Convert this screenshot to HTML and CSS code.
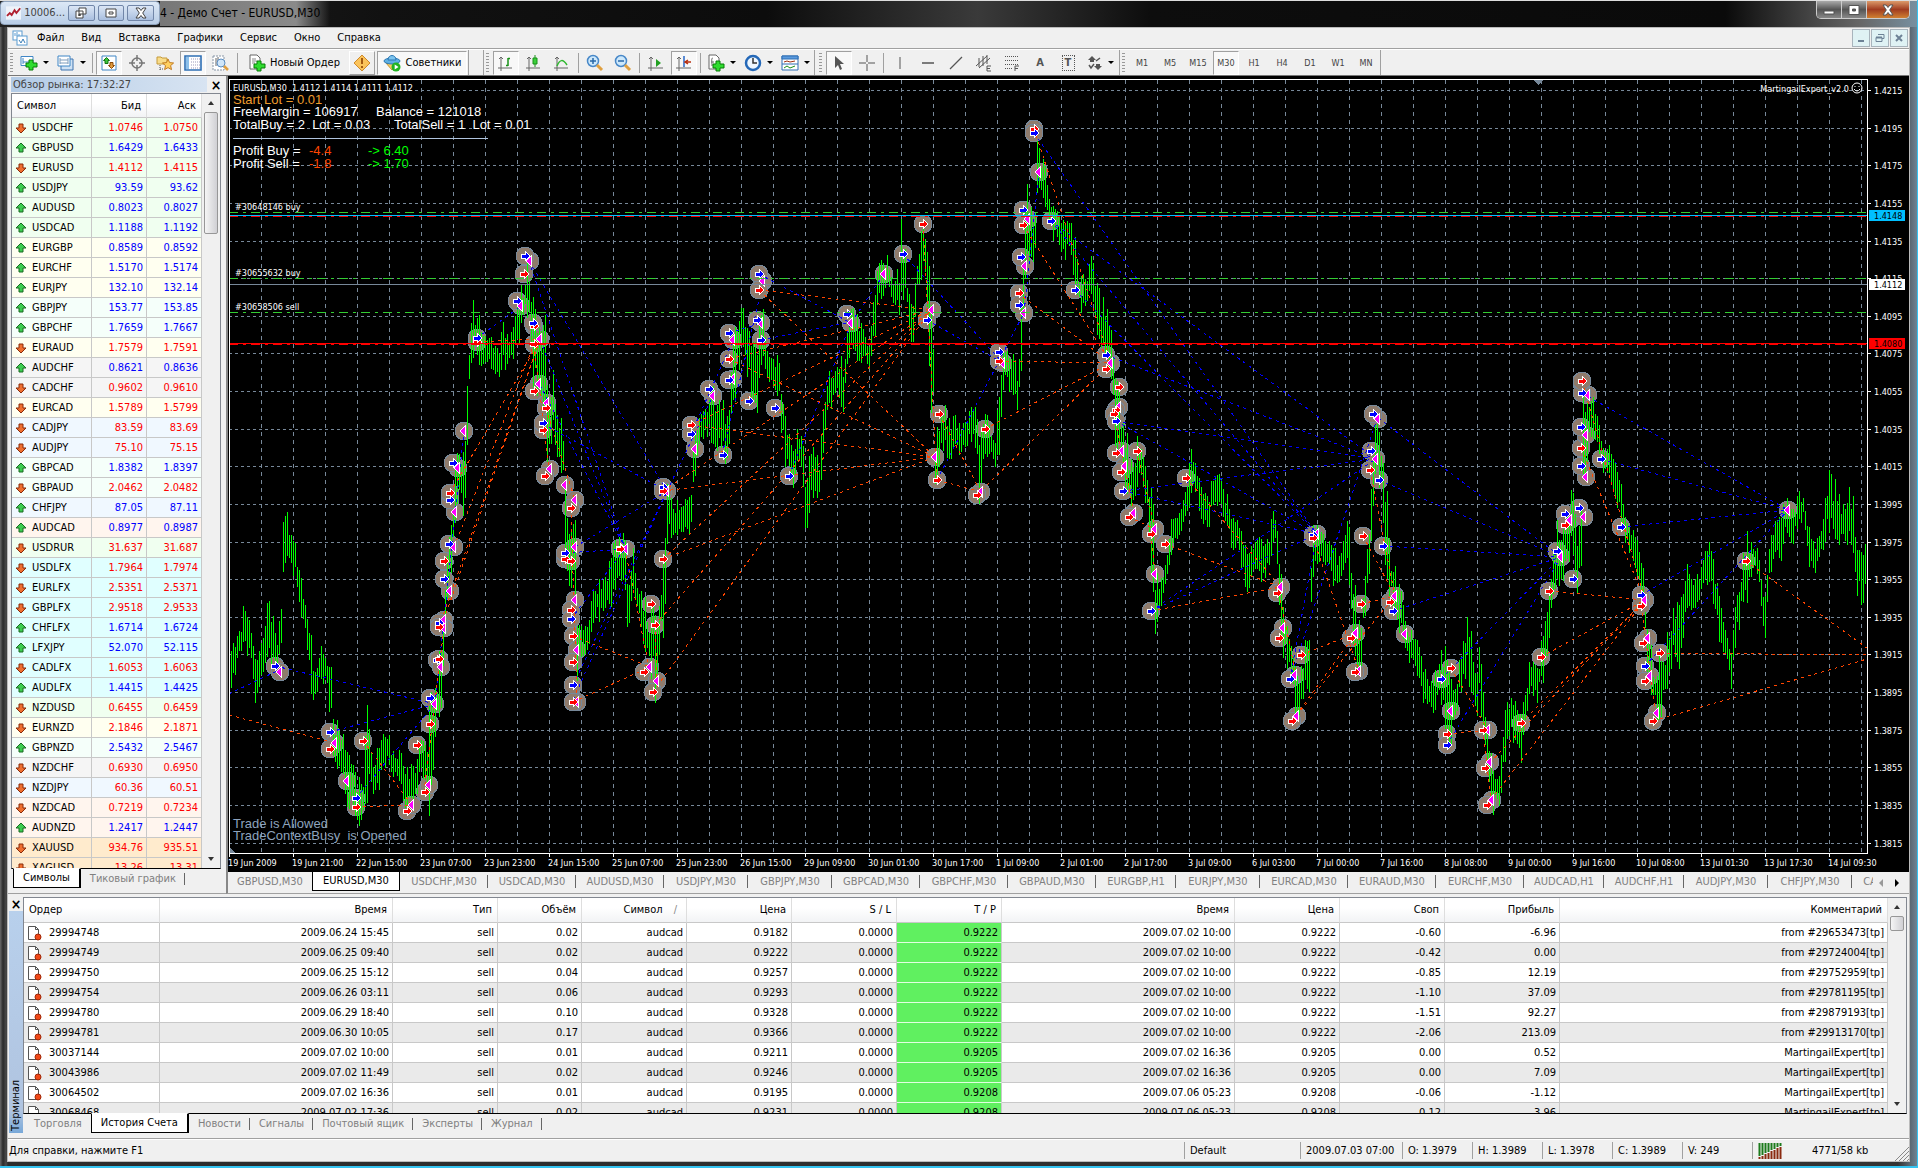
FILE: index.html
```html
<!DOCTYPE html>
<html lang="ru">
<head>
  <meta charset="UTF-8" />
  <title>Демо Счет - EURUSD,M30</title>
  <link rel="stylesheet" href="styles.css">
</head>
<body>
  <div class="window">
    <header class="titlebar">
      <div class="mini">
        <svg width="16" height="14" viewBox="0 0 16 14"><rect width="16" height="14" fill="#eef3fa"/><path d="M1 10l3-3 2 2 3-5 2 3 4-5" fill="none" stroke="#b02030" stroke-width="2"/></svg>
        <span>10006...</span>
        <button aria-label="Восстановить"><svg width="14" height="12" viewBox="0 0 14 12"><path d="M5 1h7v6h-7zM2 4h7v7h-7z" fill="#fff" stroke="#444"/><path d="M4.500 7.500h2v1h-2z" stroke="#444" fill="none"/></svg></button>
        <button aria-label="Развернуть"><svg width="14" height="12" viewBox="0 0 14 12"><path d="M2 2h10v8H2z" fill="#fff" stroke="#444"/><path d="M5 5h4v2H5z" fill="none" stroke="#444"/></svg></button>
        <button aria-label="Закрыть"><svg width="14" height="12" viewBox="0 0 14 12"><path d="M2 1h3l2 2.500L9 1h3L8.700 6l3.300 5H9L7 8.500 5 11H2l3.300-5z" fill="#fff" stroke="#444"/></svg></button>
      </div>
      <span class="title">4 - Демо Счет - EURUSD,M30</span>
      <div class="caption">
        <button aria-label="Свернуть"><svg width="14" height="12" viewBox="0 0 14 12"><path d="M2 7h10v3H2z" fill="#fff" stroke="#555"/></svg></button>
        <button aria-label="Окно"><svg width="14" height="12" viewBox="0 0 14 12"><path d="M2 1.500h10v9H2z M5.500 5h3v2h-3z" fill="#fff" fill-rule="evenodd" stroke="#555"/></svg></button>
        <button class="caption-close" aria-label="Выход"><svg width="14" height="12" viewBox="0 0 14 12"><path d="M2 1h3l2 2.500L9 1h3L8.700 6l3.300 5H9L7 8.500 5 11H2l3.300-5z" fill="#fff" stroke="#555"/></svg></button>
      </div>
    </header>

    <div class="client">
      <nav class="menu">
        <svg width="16" height="16" viewBox="0 0 16 16"><rect x="1" y="1" width="9" height="9" fill="#fff" stroke="#5b9bd0"/><path d="M3 3v3M5 2v4M7 4v3" stroke="#5b9bd0"/><rect x="5" y="6" width="10" height="9" fill="#fff" stroke="#5b9bd0"/><path d="M7 10l2 3 2-4 2 4" fill="none" stroke="#3c7fb8"/></svg>
        <a href="#">Файл</a>
        <a href="#">Вид</a>
        <a href="#">Вставка</a>
        <a href="#">Графики</a>
        <a href="#">Сервис</a>
        <a href="#">Окно</a>
        <a href="#">Справка</a>
        <div class="mdi">
          <button aria-label="Свернуть график"><svg width="10" height="10" viewBox="0 0 10 10"><path d="M2 8h6" stroke="#6d8296" stroke-width="2"/></svg></button>
          <button aria-label="Восстановить график"><svg width="10" height="10" viewBox="0 0 10 10"><path d="M3 1.500h6v4H7M1 4.500h6v4H1z" fill="none" stroke="#6d8296"/><path d="M1 4.500h6" stroke="#6d8296" stroke-width="2"/></svg></button>
          <button aria-label="Закрыть график"><svg width="10" height="10" viewBox="0 0 10 10"><path d="M2 2l6 6M8 2l-6 6" stroke="#6d8296" stroke-width="2"/></svg></button>
        </div>
      </nav>

      <div class="toolbar">
        <div class="band">
          <i class="grip"></i>
          <button class="tool wide" aria-label="Новый график"><svg width="18" height="16" viewBox="0 0 18 16"><path d="M1 1.500h12v9H1z" fill="#fff" stroke="#3f86c6"/><path d="M3 3v6M3 7h8" stroke="#3f86c6" fill="none"/><path d="M9 5h4v3h4v4h-4v3H9v-3H6V8h3z" fill="#2fdc2f" stroke="#087c08"/></svg></button>
          <button class="tool wide" aria-label="Профили"><svg width="18" height="16" viewBox="0 0 18 16"><path d="M4 4h12v11H4z" fill="#cfe2f4" stroke="#3f74b0"/><path d="M1 1h12v10H1z" fill="#fff" stroke="#3f86c6"/><path d="M3 3v6M11 3v6M3 5h8M3 8h8" stroke="#7d9cbc"/></svg></button>
          <i class="sep"></i>
          <button class="tool on" aria-label="Обзор рынка"><svg width="16" height="16" viewBox="0 0 16 16"><path d="M1 1h14v14H1z" fill="#fff" stroke="#3f86c6"/><path d="M5.500 2.500l3 3H7v3H4v-3H2.500z" fill="#3cc83c" stroke="#137013"/><path d="M10.500 13.500l3-3H12v-3H9v3H7.500z" fill="#e09a3c" stroke="#8a4a08"/></svg></button>
          <button class="tool" aria-label="Окно данных"><svg width="16" height="16" viewBox="0 0 16 16"><circle cx="8" cy="8" r="5" fill="none" stroke="#777" stroke-width="1.500"/><path d="M8 0v6M8 10v6M0 8h6M10 8h6" stroke="#777" stroke-width="1.500"/></svg></button>
          <button class="tool" aria-label="Навигатор"><svg width="18" height="16" viewBox="0 0 18 16"><path d="M1 2h4l1 1h5v6H1z" fill="#f8dc8a" stroke="#c59a3a"/><path d="M4 10v5M4 14h4" stroke="#555" stroke-dasharray="1 1"/><path d="M12 4l1.600 3.600 4 .4-3 2.600.9 4L12 12.600 8.600 14.600l.9-4-3-2.600 4-.4z" fill="#ffd060" stroke="#c27a20"/></svg></button>
          <button class="tool on" aria-label="Терминал"><svg width="18" height="16" viewBox="0 0 18 16"><path d="M1 1h16v14H1z" fill="#fff" stroke="#2e6fb4" stroke-width="1.600"/><path d="M2 2h3v12H2z" fill="#8cc0ea"/><path d="M7 4h9M7 7h9M7 10h9M7 13h9" stroke="#99b" stroke-dasharray="1 1"/></svg></button>
          <button class="tool" aria-label="Тестер стратегий"><svg width="18" height="16" viewBox="0 0 18 16"><path d="M1 1h11v14H1z" fill="#fff" stroke="#8896a6" stroke-dasharray="2 1"/><path d="M4 3v8M6 2v5" stroke="#666"/><circle cx="9" cy="8" r="4" fill="#cfe6fa" stroke="#5a8cc0"/><path d="M12 11l4 4" stroke="#e0a040" stroke-width="2.500"/></svg></button>
          <i class="sep"></i>
          <button class="tool order"><svg width="18" height="18" viewBox="0 0 18 18"><path d="M2 1h7l3 3v11H2z" fill="#fff" stroke="#666"/><path d="M4 5h4M4 7h5M4 9h3" stroke="#888"/><path d="M9 7h4v3h4v4h-4v3H9v-3H6v-4h3z" fill="#2fdc2f" stroke="#087c08"/></svg>Новый Ордер</button>
          <button class="tool raised" aria-label="Внимание"><svg width="18" height="18" viewBox="0 0 18 18"><path d="M9 1l8 8-8 8-8-8z" fill="#fbc35a" stroke="#cf8a2a"/><path d="M9 4v6M9 12v2" stroke="#a35a10" stroke-width="2"/></svg></button>
          <button class="tool on experts"><svg width="18" height="18" viewBox="0 0 18 18"><path d="M3 9l6 7 6-7z" fill="#f8cf62" stroke="#c59430"/><ellipse cx="9" cy="7" rx="8" ry="3" fill="#5fb0e4" stroke="#2b78b4"/><path d="M5 6c0-6 8-6 8 0z" fill="#7cc4ee" stroke="#2b78b4"/><circle cx="13" cy="13" r="4.500" fill="#22b322"/><path d="M11.700 10.500l3.800 2.500-3.800 2.500z" fill="#fff"/></svg>Советники</button>
        </div>
        <div class="band band-charts">
          <i class="grip"></i>
          <button class="tool on" aria-label="Бары"><svg width="16" height="16" viewBox="0 0 16 16"><path d="M3 2v14M1 4l2-2 2 2M0 13h14" fill="none" stroke="#666"/><path d="M10 3v8M10 10.500h-2M10 3.500h2" stroke="#189018" stroke-width="1.500"/></svg></button>
          <button class="tool" aria-label="Свечи"><svg width="16" height="16" viewBox="0 0 16 16"><path d="M3 2v14M1 4l2-2 2 2M0 13h14" fill="none" stroke="#666"/><path d="M9 0v12" stroke="#189018"/><path d="M7 3h4v6H7z" fill="#3ad03a" stroke="#189018"/></svg></button>
          <button class="tool" aria-label="Линия"><svg width="16" height="16" viewBox="0 0 16 16"><path d="M3 2v14M1 4l2-2 2 2M0 13h14" fill="none" stroke="#666"/><path d="M3 11c3-7 6-7 10-1" fill="none" stroke="#2eb82e" stroke-width="1.500"/></svg></button>
          <i class="sep"></i>
          <button class="tool" aria-label="Приблизить"><svg width="18" height="18" viewBox="0 0 18 18"><circle cx="7" cy="7" r="5.500" fill="#cde8fb" stroke="#4888c8" stroke-width="1.500"/><path d="M4 7h6M7 4v6" stroke="#2868a8" stroke-width="1.500"/><path d="M11 11l5 5" stroke="#e0a040" stroke-width="3"/></svg></button>
          <button class="tool" aria-label="Отдалить"><svg width="18" height="18" viewBox="0 0 18 18"><circle cx="7" cy="7" r="5.500" fill="#cde8fb" stroke="#4888c8" stroke-width="1.500"/><path d="M4 7h6" stroke="#2868a8" stroke-width="1.500"/><path d="M11 11l5 5" stroke="#e0a040" stroke-width="3"/></svg></button>
          <i class="sep"></i>
          <button class="tool" aria-label="Автопрокрутка"><svg width="16" height="16" viewBox="0 0 16 16"><path d="M3 2v14M1 4l2-2 2 2M0 13h15" fill="none" stroke="#666"/><path d="M8 4l5 4-5 4z" fill="#22a022"/></svg></button>
          <button class="tool on" aria-label="Сдвиг графика"><svg width="16" height="16" viewBox="0 0 16 16"><path d="M3 2v14M1 4l2-2 2 2M0 13h15" fill="none" stroke="#666"/><path d="M8 1v11" stroke="#2868c8" stroke-width="1.500"/><path d="M15 7h-5M12 5l-3 2 3 2" stroke="#b83010" fill="none" stroke-width="1.500"/></svg></button>
          <i class="sep"></i>
          <button class="tool wide" aria-label="Индикаторы"><svg width="18" height="18" viewBox="0 0 18 18"><path d="M2 1h7l3 3v11H2z" fill="#fff" stroke="#666"/><path d="M4 8h3M6 4c-2 0-1 3-1 8" stroke="#666" fill="none"/><path d="M9 7h4v3h4v4h-4v3H9v-3H6v-4h3z" fill="#2fdc2f" stroke="#087c08"/></svg></button>
          <button class="tool wide" aria-label="Периоды"><svg width="18" height="18" viewBox="0 0 18 18"><circle cx="9" cy="9" r="7" fill="#eef7ff" stroke="#2468b8" stroke-width="2.500"/><path d="M9 4v5h4" fill="none" stroke="#333" stroke-width="1.500"/></svg></button>
          <button class="tool wide" aria-label="Шаблоны"><svg width="18" height="16" viewBox="0 0 18 16"><path d="M1 1h16v14H1z" fill="#fff" stroke="#2e6fb4"/><path d="M1 1h16v3H1zM1 9h16" fill="#5a9ade" stroke="#2e6fb4"/><path d="M3 7l3-1 3 1 5-1" fill="none" stroke="#a03010"/><path d="M3 13l3-2 3 2 5-2" fill="none" stroke="#189018"/></svg></button>
        </div>
        <div class="band band-draw">
          <i class="grip"></i>
          <button class="tool on" aria-label="Курсор"><svg width="16" height="16" viewBox="0 0 16 16"><path d="M4 1v12l3-3 2 5 2-1-2-5h4z" fill="#555"/></svg></button>
          <button class="tool" aria-label="Перекрестие"><svg width="16" height="16" viewBox="0 0 16 16"><path d="M8 0v7M8 9v7M0 8h7M9 8h7" stroke="#555"/></svg></button>
          <i class="sep"></i>
          <button class="tool" aria-label="Вертикальная линия"><svg width="16" height="16" viewBox="0 0 16 16"><path d="M8 2v12" stroke="#555"/></svg></button>
          <button class="tool" aria-label="Горизонтальная линия"><svg width="16" height="16" viewBox="0 0 16 16"><path d="M2 8h12" stroke="#555" stroke-width="1.500"/></svg></button>
          <button class="tool" aria-label="Трендовая линия"><svg width="16" height="16" viewBox="0 0 16 16"><path d="M2 14L14 2" stroke="#555" stroke-width="1.300"/></svg></button>
          <button class="tool" aria-label="Канал"><svg width="18" height="18" viewBox="0 0 18 18"><path d="M1 12L12 2M4 14L15 4M4 4v9M8 2v10M12 1v9" stroke="#555" fill="none"/><path d="M16 12h-4v5h4M12 14.500h3" stroke="#555" fill="none"/></svg></button>
          <button class="tool" aria-label="Фибоначчи"><svg width="18" height="18" viewBox="0 0 18 18"><path d="M2 2.500h14M2 6.500h14M2 10.500h14M2 14.500h8" stroke="#555" stroke-dasharray="1 1"/><path d="M12 17v-5h4M12 14.500h3" stroke="#555" fill="none"/></svg></button>
          <button class="tool letter">A</button>
          <button class="tool letter"><span class="boxed">T</span></button>
          <button class="tool wide" aria-label="Стрелки"><svg width="16" height="16" viewBox="0 0 16 16"><path d="M5 1l4 4H7v2H3V5H1zM11 15l-4-4h2V9h4v2h2z" fill="#555"/><path d="M2 10l2 3 3-4M9 6l4-3" fill="none" stroke="#555" stroke-width="1.500"/></svg></button>
        </div>
        <div class="band band-periods">
          <i class="grip"></i>
          <button class="tool period">M1</button>
          <button class="tool period">M5</button>
          <button class="tool period">M15</button>
          <button class="tool period on">M30</button>
          <button class="tool period">H1</button>
          <button class="tool period">H4</button>
          <button class="tool period">D1</button>
          <button class="tool period">W1</button>
          <button class="tool period">MN</button>
        </div>
      </div>

      <main class="workspace">
        <aside class="market">
          <div class="market-head"><span>Обзор рынка: 17:32:27</span><button class="x" aria-label="Закрыть обзор">×</button></div>
          <div class="scroller">
            <div class="clip">
              <table class="quotes">
                <thead><tr><th>Символ</th><th>Бид</th><th>Аск</th></tr></thead>
                <tbody id="quotes"></tbody>
              </table>
            </div>
            <div class="scrollbar"><i class="up"></i><i class="thumb long"></i><i class="down"></i></div>
          </div>
          <div class="tabs">
            <button class="tab active">Символы</button>
            <button class="tab">Тиковый график</button>
          </div>
        </aside>

        <section class="charts">
          <div class="chart" id="chart"></div>
          <div class="chart-tabs">
            <div class="chart-tabs-list" id="chart-tabs"></div>
            <button class="arrow muted" aria-label="Назад"></button>
            <button class="arrow" aria-label="Вперёд"></button>
          </div>
        </section>
      </main>

      <section class="terminal">
        <div class="strip"><button class="x" aria-label="Закрыть терминал">×</button><span>Терминал</span></div>
        <div class="terminal-body">
          <div class="scroller">
            <div class="clip">
              <table class="orders">
                <colgroup><col class="c-order"><col class="c-time"><col class="c-mid"><col class="c-vol"><col class="c-mid"><col class="c-mid"><col class="c-mid"><col class="c-mid"><col class="c-time"><col class="c-mid"><col class="c-mid"><col class="c-profit"><col></colgroup>
                <thead><tr><th>Ордер</th><th>Время</th><th>Тип</th><th>Объём</th><th>Символ <span class="sort">∕</span></th><th>Цена</th><th>S / L</th><th>T / P</th><th>Время</th><th>Цена</th><th>Своп</th><th>Прибыль</th><th>Комментарий</th></tr></thead>
                <tbody id="orders"></tbody>
              </table>
            </div>
            <div class="scrollbar"><i class="up"></i><i class="thumb"></i><i class="down"></i></div>
          </div>
          <div class="tabs">
            <button class="tab">Торговля</button>
            <button class="tab active">История Счета</button>
            <button class="tab">Новости</button>
            <button class="tab">Сигналы</button>
            <button class="tab">Почтовый ящик</button>
            <button class="tab">Эксперты</button>
            <button class="tab">Журнал</button>
          </div>
        </div>
      </section>

      <footer class="status">
        <span class="help">Для справки, нажмите F1</span>
        <span class="s-profile">Default</span>
        <span class="s-date">2009.07.03 07:00</span>
        <span>O: 1.3979</span>
        <span>H: 1.3989</span>
        <span>L: 1.3978</span>
        <span>C: 1.3989</span>
        <span>V: 249</span>
        <span class="s-net">
          <svg width="24" height="16" viewBox="0 0 24 16"><path d="M1.500 0v13M4.500 0v12M7.500 0v10M10.500 0v9M13.500 0v7M16.500 0v6M19.500 0v4M22.500 0v3" stroke="#1c7a1c" stroke-width="2"/><path d="M1.500 14v2M4.500 13v3M7.500 11v5M10.500 10v6M13.500 8v8M16.500 7v9M19.500 5v11M22.500 4v12" stroke="#8a2a10" stroke-width="2"/></svg>
          4771/58 kb
        </span>
        <svg class="resize" width="14" height="14" viewBox="0 0 14 14"><path d="M0 14L14 0M4 14L14 4M8 14l6-6M12 14l2-2" stroke="#888"/></svg>
      </footer>
    </div>
  </div>
  <script src="app.js"></script>
</body>
</html>
```
FILE: styles.css
```css
* {
  box-sizing: border-box;
}

body {
  margin: 0;
  background: #111;
  color: #000;
  font: 11px/14px Tahoma, "DejaVu Sans Condensed", "Noto Sans", sans-serif;
}

button {
  margin: 0;
  padding: 0;
  border: none;
  background: none;
  color: inherit;
  font: inherit;
}

.window {
  height: 100vh;
  min-height: 600px;
  display: flex;
  flex-direction: column;
  padding: 0 7px 4px;
  background: linear-gradient(to right, #6a6a6a, #2a2a2a 3px, #4a4a4a 6px, #2c2c2c 8px, #333 99%, #6f8494);
  border-right: 1px solid #35c3f0;
  border-bottom: 2px solid #35c3f0;
}

/* title bar */

.titlebar {
  flex: none;
  height: 27px;
  margin: 0 -7px;
  display: flex;
  align-items: flex-start;
  border-top: 1px solid #ddd;
  background: linear-gradient(to right, #222 0, #111 20%, #0c0c0c 40%, #3a3a3a 51%, #0d0d0d 60%, #0a0a0a 90%, #666 97%, #7890a0);
}

.mini {
  width: 160px;
  height: 24px;
  padding: 0 5px;
  display: flex;
  align-items: center;
  gap: 3px;
  border: 1px solid #8fa3bd;
  border-radius: 4px;
  background: linear-gradient(#dce8f6, #b9cde6);
  color: #444;
}

.mini span {
  flex: 1;
}

.mini button {
  width: 28px;
  height: 16px;
  display: flex;
  align-items: center;
  justify-content: center;
  border: 1px solid #7186a8;
  border-radius: 2px;
  background: linear-gradient(#dbe6f5, #a9bfdf);
}

.title {
  padding: 4px 10px 4px 0;
  font-size: 12px;
  line-height: 17px;
  background: linear-gradient(to right, #777, #8a8a8a 80%, transparent);
}

.caption {
  margin-left: auto;
  margin-right: 7px;
  display: flex;
  height: 18px;
  border: 1px solid #ccc;
  border-top: none;
  border-radius: 0 0 5px 5px;
  overflow: hidden;
}

.caption button {
  width: 25px;
  display: flex;
  align-items: center;
  justify-content: center;
  border-right: 1px solid #ccc;
  background: linear-gradient(#aaa, #555 50%, #888);
}

.caption .caption-close {
  width: 42px;
  border-right: none;
  background: linear-gradient(#dc9a6a, #a03c20 50%, #d08030);
}

/* client area */

.client {
  flex: 1;
  min-height: 0;
  display: flex;
  flex-direction: column;
  border: 1px solid #bbb;
  background: #f0f0f0;
}

.menu {
  flex: none;
  height: 21px;
  padding: 0 1px 0 4px;
  display: flex;
  align-items: center;
  border-bottom: 1px solid #a0a0a0;
}

.menu a {
  padding: 0 8px 0 9px;
  color: #000;
  text-decoration: none;
}

.mdi {
  margin-left: auto;
  display: flex;
  gap: 1px;
}

.mdi button {
  width: 18px;
  height: 18px;
  display: flex;
  align-items: center;
  justify-content: center;
  border: 1px solid #a8b4bc;
  background: #dff2f4;
}

.toolbar {
  flex: none;
  height: 27px;
  display: flex;
  border-top: 1px solid #fff;
  border-bottom: 1px solid #777;
}

.band {
  display: flex;
  align-items: center;
  border-right: 1px solid #a0a0a0;
}

.band-charts {
  margin-left: 14px;
  border-left: 1px solid #a0a0a0;
}

.band-draw {
  margin-left: 2px;
}

.grip {
  width: 3px;
  height: 20px;
  margin: 0 3px 0 2px;
  background: repeating-linear-gradient(#999 0 1px, #f0f0f0 1px 3px);
}

.sep {
  width: 1px;
  height: 20px;
  margin: 0 2px;
  background: #a0a0a0;
}

.tool {
  width: 26px;
  height: 24px;
  margin: 0 1px;
  display: flex;
  align-items: center;
  justify-content: center;
}

.tool.on {
  border: 1px solid #a0a0a0;
  border-right-color: #fff;
  border-bottom-color: #fff;
  background: #f8f8f8;
}

.tool.raised {
  border: 1px solid #fff;
  border-right-color: #a0a0a0;
  border-bottom-color: #a0a0a0;
}

.tool.wide {
  width: 35px;
  gap: 5px;
}

.tool.wide::after {
  content: "";
  border: 3px solid transparent;
  border-top-color: #000;
  border-bottom: none;
}

.tool.order {
  width: 106px;
  gap: 4px;
}

.tool.experts {
  width: 90px;
  gap: 5px;
}

.tool.letter {
  color: #555;
  font-weight: bold;
}

.boxed {
  width: 13px;
  border: 1px dotted #555;
}

.tool.period {
  color: #444;
  font-size: 9px;
}

.workspace {
  flex: 1;
  min-height: 0;
  display: flex;
}

/* market watch */

.market {
  width: 218px;
  flex: none;
  display: flex;
  flex-direction: column;
  padding: 0 5px 5px 3px;
  border-bottom: 1px solid #a0a0a0;
}

.market-head {
  height: 17px;
  margin-right: -3px;
  display: flex;
  justify-content: space-between;
  align-items: center;
  color: #444;
}

.market-head span {
  width: 196px;
  padding-left: 2px;
  line-height: 15px;
  background: linear-gradient(to right, #b3cbe6, #d8e4f2);
}

.x {
  width: 16px;
  color: #000;
  font-size: 14px;
  font-weight: bold;
}

.scroller {
  flex: 1;
  min-height: 0;
  display: flex;
  border: 1px solid #828790;
  border-bottom: 1px solid #000;
  background: #fff;
}

.clip {
  flex: 1;
  overflow: hidden;
}

table {
  width: 100%;
  border-collapse: separate;
  border-spacing: 0;
  table-layout: fixed;
}

th {
  height: 24px;
  padding: 0 5px;
  border-right: 1px solid #dedede;
  border-bottom: 1px solid #c8c8c8;
  background: linear-gradient(#fff 40%, #f2f3f5);
  font-weight: normal;
  text-align: right;
}

td {
  height: 20px;
  padding: 0 3px;
  border-right: 1px solid #c8c8c8;
  border-bottom: 1px solid #c8c8c8;
  text-align: right;
  white-space: nowrap;
}

th:first-child,
td:first-child {
  text-align: left;
}

.quotes th:nth-child(1) {
  width: 80px;
}

.quotes th:nth-child(2) {
  width: 55px;
}

.sym {
  display: flex;
  align-items: center;
  gap: 5px;
}

.is-up {
  color: #00f;
}

.is-down {
  color: #f00;
}

.honeydew { background: #f0fff0; }
.ivory { background: #fffff0; }
.mint { background: #f5fffa; }
.smoke { background: #f5f5f5; }
.alice { background: #f0f8ff; }
.shell { background: #fff5ee; }
.cyan { background: #e0ffff; }
.almond { background: #ffebcd; }

.scrollbar {
  width: 18px;
  flex: none;
  display: flex;
  flex-direction: column;
  align-items: center;
  background: #f0f0f0;
}

.scrollbar .up,
.scrollbar .down {
  margin: 7px 0;
  border: 3px solid transparent;
}

.scrollbar .up {
  border-bottom: 4px solid #333;
  border-top: none;
}

.scrollbar .down {
  margin-top: auto;
  border-top: 4px solid #333;
  border-bottom: none;
}

.thumb {
  width: 14px;
  height: 15px;
  border: 1px solid #979797;
  border-radius: 2px;
  background: linear-gradient(to right, #f5f5f5, #d0d0d4);
}

.thumb.long {
  height: 122px;
}

.tabs {
  flex: none;
  height: 19px;
  display: flex;
  padding-left: 2px;
}

.tab {
  position: relative;
  padding: 0 9px;
  color: #808080;
}

.tab:not(.active)::after {
  content: "";
  position: absolute;
  right: 0;
  top: 4px;
  height: 12px;
  border-right: 1px solid #666;
}

.tab:has(+ .active)::after {
  display: none;
}

.tab.active {
  margin-top: -1px;
  border: 1px solid #000;
  border-top-color: #fff;
  border-right-width: 2px;
  background: #fff;
  color: #000;
}

/* chart */

.charts {
  flex: 1;
  min-width: 0;
  display: flex;
  flex-direction: column;
  border-left: 2px solid #888;
  border-bottom: 1px solid #a0a0a0;
}

.chart {
  flex: 1;
  min-height: 0;
  overflow: hidden;
  background: #000;
}

.chart svg {
  display: block;
}

.chart text {
  white-space: pre;
}

.axis-text {
  fill: #fff;
  font-size: 9px;
}

.comment {
  font-family: "Liberation Sans", sans-serif;
  font-size: 13px;
}

.chart-tabs {
  flex: none;
  height: 22px;
  padding-right: 4px;
  display: flex;
  align-items: center;
  border-top: 1px solid #000;
}

.chart-tabs-list {
  flex: 1;
  align-self: stretch;
  display: flex;
  overflow: hidden;
}

.chart-tab {
  flex: none;
  width: 88px;
  height: 19px;
  color: #808080;
  position: relative;
}

.chart-tab:first-child,
.chart-tab.jpy {
  width: 84px;
}

.chart-tab.h1 {
  width: 80px;
}

.chart-tab::after {
  content: "";
  position: absolute;
  right: 0;
  top: 3px;
  height: 13px;
  border-right: 1px solid #666;
}

.chart-tab.active {
  border: 1px solid #000;
  border-top: none;
  background: #fff;
  color: #000;
}

.chart-tab.active::after,
.chart-tab:first-child::after {
  display: none;
}

.arrow {
  width: 16px;
  height: 12px;
}

.arrow::before {
  content: "";
  display: inline-block;
  border: 4px solid transparent;
  border-left-color: #000;
  border-right: none;
}

.arrow.muted::before {
  border: 4px solid transparent;
  border-right-color: #999;
  border-left: none;
}

/* terminal */

.terminal {
  flex: none;
  height: 245px;
  padding: 3px 2px 5px 1px;
  display: flex;
  border-bottom: 1px solid #a0a0a0;
}

.strip {
  width: 14px;
  display: flex;
  flex-direction: column;
  align-items: center;
}

.strip span {
  flex: 1;
  width: 14px;
  writing-mode: vertical-rl;
  transform: rotate(180deg);
  padding-top: 2px;
  background: linear-gradient(#78a8d8, #b0c4e0 10%, #b8d0ec);
}

.terminal-body {
  flex: 1;
  min-width: 0;
  display: flex;
  flex-direction: column;
}

.orders tr:nth-child(even) td {
  background: #eaeaea;
}

.orders tr td:nth-child(8) {
  background: #60f060;
  border-bottom-color: #e0ffe0;
}

.orders td:first-child svg {
  margin-right: 7px;
  vertical-align: middle;
}

.orders th {
  height: 25px;
}

.c-order { width: 136px; }
.c-time { width: 233px; }
.c-mid { width: 105px; }
.c-vol { width: 84px; }
.c-profit { width: 115px; }

.sort {
  padding: 0 4px 0 8px;
  color: #888;
}

/* status bar */

.status {
  flex: none;
  height: 22px;
  display: flex;
  align-items: center;
  border-top: 1px solid #fff;
  white-space: nowrap;
}

.status span {
  width: 70px;
  padding-left: 5px;
  line-height: 17px;
  border-left: 1px solid #a0a0a0;
}

.status .help {
  flex: 1;
  padding-left: 1px;
  border: none;
}

.status .s-profile {
  width: 116px;
}

.status .s-date {
  width: 102px;
}

.status .s-net {
  width: 143px;
  display: flex;
  align-items: center;
  gap: 30px;
}

.resize {
  align-self: flex-end;
}
```
FILE: app.js
```js
// symbol, bid, ask, direction, row colour
const quotes = `USDCHF 1.0746 1.0750 down honeydew
GBPUSD 1.6429 1.6433 up honeydew
EURUSD 1.4112 1.4115 down honeydew
USDJPY 93.59 93.62 up honeydew
AUDUSD 0.8023 0.8027 up honeydew
USDCAD 1.1188 1.1192 up honeydew
EURGBP 0.8589 0.8592 up ivory
EURCHF 1.5170 1.5174 up ivory
EURJPY 132.10 132.14 up ivory
GBPJPY 153.77 153.85 up mint
GBPCHF 1.7659 1.7667 up mint
EURAUD 1.7579 1.7591 down ivory
AUDCHF 0.8621 0.8636 up smoke
CADCHF 0.9602 0.9610 down smoke
EURCAD 1.5789 1.5799 down ivory
CADJPY 83.59 83.69 down alice
AUDJPY 75.10 75.15 down alice
GBPCAD 1.8382 1.8397 up mint
GBPAUD 2.0462 2.0482 down mint
CHFJPY 87.05 87.11 up alice
AUDCAD 0.8977 0.8987 up shell
USDRUR 31.637 31.687 down honeydew
USDLFX 1.7964 1.7974 down cyan
EURLFX 2.5351 2.5371 down cyan
GBPLFX 2.9518 2.9533 down cyan
CHFLFX 1.6714 1.6724 up cyan
LFXJPY 52.070 52.115 up cyan
CADLFX 1.6053 1.6063 down cyan
AUDLFX 1.4415 1.4425 up cyan
NZDUSD 0.6455 0.6459 down honeydew
EURNZD 2.1846 2.1871 down ivory
GBPNZD 2.5432 2.5467 up mint
NZDCHF 0.6930 0.6950 down smoke
NZDJPY 60.36 60.51 down alice
NZDCAD 0.7219 0.7234 down shell
AUDNZD 1.2417 1.2447 up shell
XAUUSD 934.76 935.51 down almond
XAGUSD 13.26 13.31 down almond`;

const icons = {
  up: '<svg width="12" height="12" viewBox="0 0 12 12"><path d="M6 1l5 5H8v4H4V6H1z" fill="#3ccc50" stroke="#186a20"/></svg>',
  down: '<svg width="12" height="12" viewBox="0 0 12 12"><path d="M6 11l5-5H8V2H4v4H1z" fill="#f07030" stroke="#8a2a08"/></svg>',
  doc: '<svg width="15" height="16" viewBox="0 0 15 16"><path d="M1.500 1.500h7l3 3v10h-10z" fill="#fff" stroke="#555"/><path d="M8.500 1.500v3h3" fill="none" stroke="#555"/><circle cx="11" cy="12" r="3" fill="#f04818" stroke="#a02808"/></svg>'
};

document.getElementById("quotes").innerHTML = quotes.split("\n").map(line => {
  const [name, bid, ask, dir, tone] = line.split(" ");
  return `<tr class="${tone}"><td><span class="sym">${icons[dir]}${name}</span></td><td class="is-${dir}">${bid}</td><td class="is-${dir}">${ask}</td></tr>`;
}).join("");

const orders = [
  ["29994748", "2009.06.24 15:45", "0.02", "0.9182", "0.9222", "2009.07.02 10:00", "-0.60", "-6.96", "from #29653473[tp]"],
  ["29994749", "2009.06.25 09:40", "0.02", "0.9222", "0.9222", "2009.07.02 10:00", "-0.42", "0.00", "from #29724004[tp]"],
  ["29994750", "2009.06.25 15:12", "0.04", "0.9257", "0.9222", "2009.07.02 10:00", "-0.85", "12.19", "from #29752959[tp]"],
  ["29994754", "2009.06.26 03:11", "0.06", "0.9293", "0.9222", "2009.07.02 10:00", "-1.10", "37.09", "from #29781195[tp]"],
  ["29994780", "2009.06.29 18:40", "0.10", "0.9328", "0.9222", "2009.07.02 10:00", "-1.51", "92.27", "from #29879193[tp]"],
  ["29994781", "2009.06.30 10:05", "0.17", "0.9366", "0.9222", "2009.07.02 10:00", "-2.06", "213.09", "from #29913170[tp]"],
  ["30037144", "2009.07.02 10:00", "0.01", "0.9211", "0.9205", "2009.07.02 16:36", "0.00", "0.52", "MartingailExpert[tp]"],
  ["30043986", "2009.07.02 11:49", "0.02", "0.9246", "0.9205", "2009.07.02 16:36", "0.00", "7.09", "MartingailExpert[tp]"],
  ["30064502", "2009.07.02 16:36", "0.01", "0.9195", "0.9208", "2009.07.06 05:23", "-0.06", "-1.12", "MartingailExpert[tp]"],
  ["30068468", "2009.07.02 17:36", "0.02", "0.9231", "0.9208", "2009.07.06 05:23", "-0.12", "3.96", "MartingailExpert[tp]"]
];

document.getElementById("orders").innerHTML = orders.map(([id, open, lots, price, tp, close, swap, profit, note]) => {
  const cells = [icons.doc + id, open, "sell", lots, "audcad", price, "0.0000", tp, close, tp, swap, profit, note];
  return "<tr>" + cells.map(c => `<td>${c}</td>`).join("") + "</tr>";
}).join("");

const tabs = "GBPUSD,M30 EURUSD,M30 USDCHF,M30 USDCAD,M30 AUDUSD,M30 USDJPY,M30 GBPJPY,M30 GBPCAD,M30 GBPCHF,M30 GBPAUD,M30 EURGBP,H1 EURJPY,M30 EURCAD,M30 EURAUD,M30 EURCHF,M30 AUDCAD,H1 AUDCHF,H1 AUDJPY,M30 CHFJPY,M30 CADCHF,M30";
document.getElementById("chart-tabs").innerHTML = tabs.split(" ").map(t => {
  const kind = t.endsWith("H1") ? " h1" : t.includes("JPY") ? " jpy" : "";
  return `<button class="chart-tab${kind}${t === "EURUSD,M30" ? " active" : ""}">${t}</button>`;
}).join("");

// price envelope: x, high, low (px from the window corner)
const envelope = `229 660 695,237 638 665,245 600 650,251 635 660,256 670 715,261 645 680,267 600 655,272 615 665,278 635 672,281 610 640,283 478 628,285 510 560,290 530 575,292 517 565,296 545 590,300 570 615,306 610 640,310 625 680,314 665 715,319 650 680,325 655 680,331 670 720,334 725 765,340 720 780,346 755 800,351 765 810,356 775 825,363 775 826,366 690 810,370 730 780,373 760 797,378 740 790,382 730 765,387 730 765,392 755 775,400 755 778,405 770 810,410 760 812,415 775 800,420 740 780,425 745 790,430 700 820,434 690 760,438 650 735,440 625 735,444 590 640,448 550 590,452 500 560,455 450 540,459 440 500,462 430 525,466 420 500,468 335 435,471 299 360,477 310 360,482 335 360,488 335 362,495 345 375,499 355 385,503 320 372,508 330 375,513 318 355,519 300 340,524 270 330,527 240 320,531 280 380,536 295 390,540 300 400,545 320 420,548 400 490,552 350 440,558 400 460,564 430 500,566 500 590,570 520 580,575 500 610,577 590 700,581 590 680,586 630 650,592 600 630,598 575 620,603 580 612,608 560 620,613 545 590,620 535 580,625 540 620,627 590 635,633 540 600,637 575 620,642 600 640,644 580 650,648 610 680,653 600 670,655 620 705,658 600 680,661 590 640,664 480 640,668 490 540,674 505 535,680 505 532,686 505 535,691 480 530,693 440 500,698 415 440,704 415 435,710 390 440,716 390 450,722 390 460,726 420 460,730 400 450,732 330 450,738 310 370,743 305 350,748 335 380,753 345 400,757 350 415,759 300 380,762 290 370,766 350 375,772 355 380,779 360 405,784 400 460,790 440 470,793 455 495,797 425 465,802 440 470,805 460 530,807 450 532,811 440 495,816 460 510,819 450 508,824 390 440,829 370 400,834 370 410,838 350 400,844 370 410,847 330 360,852 305 350,857 310 365,863 335 355,870 345 368,874 290 340,878 265 310,884 260 295,888 255 298,893 280 308,899 270 310,901 215 290,905 250 300,908 290 320,912 300 345,916 260 310,920 235 280,925 225 275,927 240 310,929 270 385,933 340 430,935 440 497,940 400 460,945 400 445,950 430 465,955 415 445,960 430 455,966 425 440,972 400 440,977 420 450,979 440 500,983 420 460,988 420 450,995 435 466,1000 385 450,1003 340 385,1008 355 390,1014 360 395,1018 380 410,1021 280 370,1024 230 290,1026 180 265,1030 210 260,1035 175 265,1037 130 200,1041 160 200,1046 170 210,1050 200 235,1058 215 240,1065 215 255,1070 225 255,1075 240 290,1080 280 310,1087 280 300,1092 255 290,1096 275 330,1101 300 345,1106 300 350,1110 330 370,1115 350 440,1119 390 470,1124 430 495,1128 440 510,1133 465 500,1137 440 490,1142 450 480,1148 480 520,1153 500 600,1155 565 635,1158 580 615,1163 570 600,1168 540 575,1174 510 540,1180 515 535,1186 490 520,1191 450 490,1196 460 495,1202 490 525,1208 500 530,1213 475 500,1220 480 500,1226 495 530,1232 520 545,1238 520 550,1244 550 580,1249 555 590,1256 540 570,1263 545 580,1270 530 565,1275 505 550,1279 550 600,1281 580 660,1286 620 660,1291 640 690,1296 660 720,1299 680 728,1304 650 700,1309 620 690,1312 530 585,1318 530 555,1324 540 560,1332 545 580,1338 560 590,1343 540 570,1348 520 560,1352 560 640,1356 600 680,1360 620 680,1363 580 640,1368 520 600,1372 450 540,1376 410 460,1380 440 490,1384 450 560,1388 500 580,1392 560 620,1396 570 640,1402 600 630,1408 630 660,1416 640 665,1422 660 700,1428 680 710,1434 670 710,1440 650 690,1445 640 740,1450 680 765,1455 680 720,1460 660 690,1466 620 670,1472 640 700,1476 690 720,1480 630 700,1485 700 760,1489 740 790,1493 755 810,1499 780 815,1503 720 770,1508 690 740,1514 700 740,1520 710 765,1525 695 730,1530 660 690,1536 670 700,1542 640 690,1548 600 660,1553 550 600,1558 510 580,1562 530 580,1567 515 560,1572 490 550,1577 530 590,1581 470 570,1583 400 500,1586 370 470,1592 385 430,1597 420 450,1603 450 470,1611 445 480,1616 460 500,1622 490 530,1628 530 545,1634 530 560,1638 530 590,1643 570 620,1648 620 690,1653 660 710,1658 660 725,1664 650 710,1670 620 670,1675 600 660,1680 600 670,1686 560 600,1692 580 610,1698 580 600,1704 555 580,1710 545 580,1715 570 620,1722 620 650,1728 640 670,1731 640 690,1736 600 640,1742 560 610,1748 530 600,1754 540 570,1760 560 600,1764 590 655,1768 540 600,1773 530 560,1780 520 560,1786 500 530,1790 515 545,1796 500 535,1803 490 520,1808 530 565,1814 545 570,1820 530 555,1825 500 540,1828 472 530,1835 480 540,1842 510 545,1848 490 540,1853 500 560,1858 540 600,1862 550 610,1866 550 580`
  .split(",").map(p => p.split(" ").map(Number));

// deals: b = buy, r = sell, m = close
const deals = `b 275 666,m 280 672,b 330 732,m 335 743,r 330 749,m 347 781,r 363 741,b 356 798,r 356 807,r 407 811,m 412 805,r 417 745,r 425 792,m 429 785,r 430 724,b 430 698,m 435 704,b 437 660,r 439 659,m 441 667,m 444 620,m 444 628,b 439 623,r 439 627,m 450 591,b 444 579,r 444 561,m 454 547,b 449 544,m 455 512,b 450 500,r 450 493,m 458 468,b 453 463,m 464 431,r 477 342,b 477 338,m 521 306,b 517 301,m 530 261,b 525 256,r 524 274,r 534 326,b 533 323,m 540 339,r 534 344,m 539 384,r 534 391,m 547 403,r 546 408,r 543 430,b 543 423,m 550 469,r 545 476,m 565 485,m 575 500,r 571 508,m 575 547,r 565 559,b 565 553,r 571 561,m 575 600,r 571 610,b 571 619,r 573 636,m 577 650,r 573 662,b 573 685,m 577 702,r 573 702,b 620 548,m 626 549,r 620 549,r 651 604,r 655 625,m 650 667,r 644 672,m 657 681,r 653 692,r 663 559,m 667 491,b 663 487,r 663 491,r 691 425,b 691 434,m 695 449,m 713 396,b 709 389,b 723 455,m 733 340,b 729 333,r 729 359,m 733 379,b 729 380,b 749 401,m 763 281,b 759 274,r 759 290,m 761 323,b 757 320,b 761 340,b 775 408,b 789 476,m 851 323,b 847 314,m 884 274,b 903 254,r 923 224,m 932 310,b 927 320,r 939 414,m 935 457,r 937 480,m 981 492,r 977 495,r 985 429,m 1003 363,b 999 352,r 999 361,r 1034 129,b 1034 133,m 1039 172,m 1028 219,b 1023 210,r 1023 225,m 1025 266,b 1021 257,m 1024 313,r 1019 293,b 1019 305,b 1051 221,b 1075 290,m 1111 363,b 1106 355,r 1106 369,r 1119 387,m 1119 407,r 1116 410,r 1114 414,b 1116 421,m 1122 451,r 1116 453,r 1137 451,m 1125 466,r 1121 472,b 1123 491,m 1134 513,r 1129 517,m 1155 529,r 1151 534,r 1165 544,m 1155 574,r 1186 478,b 1151 611,m 1281 587,r 1277 593,m 1283 628,r 1279 638,r 1301 655,m 1295 675,b 1290 679,m 1297 716,r 1292 721,m 1317 534,b 1313 535,r 1313 538,m 1378 419,b 1373 414,b 1371 451,m 1376 459,r 1370 470,b 1379 480,r 1363 536,b 1383 546,r 1361 604,m 1395 596,r 1390 602,b 1393 611,m 1405 634,m 1356 633,r 1351 638,m 1359 671,r 1355 672,b 1441 679,r 1451 668,m 1451 711,r 1447 734,b 1447 745,m 1488 730,r 1483 730,m 1490 762,r 1485 768,m 1492 800,r 1487 805,r 1521 723,r 1541 657,r 1549 591,m 1561 557,b 1557 551,m 1570 520,b 1565 514,r 1565 525,b 1573 579,m 1584 517,b 1579 508,m 1586 477,b 1581 466,r 1581 448,m 1586 435,b 1581 427,m 1588 395,b 1582 393,r 1582 381,b 1601 459,b 1621 527,m 1645 600,b 1641 595,r 1641 606,m 1648 638,r 1643 643,r 1660 653,b 1645 666,m 1650 676,r 1645 681,m 1657 713,r 1653 721,m 1788 510,r 1746 561`
  .split(",").map(d => d.split(" "));

const buyLines = `229 694 279 670,275 666 435 704,330 732 435 704,356 798 435 704,477 338 521 306,529 261 625 548,529 261 667 491,540 340 625 548,543 424 667 491,540 385 625 548,565 553 625 549,575 547 667 491,573 685 667 491,571 619 625 549,573 700 667 491,435 704 464 431,667 491 713 396,691 434 733 340,759 274 851 323,761 340 851 322,729 333 762 323,722 455 759 300,789 476 851 323,851 323 884 274,903 254 1003 363,937 480 1024 313,927 320 1003 363,1024 313 1039 172,1034 133 1317 534,1051 221 1376 459,1075 290 1317 534,1106 355 1376 459,1116 421 1376 459,1123 491 1376 459,1123 491 1317 534,1116 421 1317 534,1151 611 1317 534,1151 611 1376 459,1051 221 1317 534,1290 679 1317 534,1290 679 1377 419,1373 414 1561 557,1383 546 1561 557,1393 611 1561 557,1379 480 1561 557,1447 745 1561 557,1441 679 1561 557,1582 393 1788 510,1601 459 1788 510,1621 527 1788 510,1641 595 1788 510,1645 666 1788 510`;

const sellLines = `229 715 335 743,363 741 412 805,356 807 412 805,424 792 444 628,439 627 540 339,454 547 534 344,444 620 540 339,450 493 540 340,477 342 540 339,534 344 549 469,546 408 575 500,571 508 577 702,573 636 650 667,573 702 650 667,625 549 649 667,655 625 657 681,663 491 935 457,663 491 926 315,663 559 935 457,663 559 931 310,655 625 931 310,653 692 931 310,691 425 935 457,691 425 931 310,729 359 935 457,729 359 931 310,759 290 931 310,759 290 935 457,923 224 937 480,937 480 981 492,939 414 981 492,985 429 1111 363,999 361 1111 363,977 495 1111 363,1034 129 1111 363,1023 225 1111 363,1018 293 1111 363,1114 414 1134 513,1129 517 1155 529,1151 534 1155 574,1165 544 1281 587,1151 611 1281 587,1186 478 1281 587,1137 451 1155 529,1279 593 1296 675,1292 721 1356 633,1301 655 1356 633,1292 721 1395 596,1313 538 1359 671,1361 604 1395 596,1363 536 1395 596,1370 470 1395 596,1447 734 1488 730,1451 668 1488 730,1483 730 1491 800,1549 591 1645 600,1541 657 1645 600,1521 723 1645 600,1485 768 1645 600,1487 805 1645 600,1582 381 1645 600,1581 448 1645 600,1641 606 1656 713,1660 653 1867 655,1653 721 1867 659,1746 561 1867 648`;

const times = ["19 Jun 2009", "19 Jun 21:00", "22 Jun 15:00", "23 Jun 07:00", "23 Jun 23:00", "24 Jun 15:00", "25 Jun 07:00", "25 Jun 23:00", "26 Jun 15:00", "29 Jun 09:00", "30 Jun 01:00", "30 Jun 17:00", "1 Jul 09:00", "2 Jul 01:00", "2 Jul 17:00", "3 Jul 09:00", "6 Jul 03:00", "7 Jul 00:00", "7 Jul 16:00", "8 Jul 08:00", "9 Jul 00:00", "9 Jul 16:00", "10 Jul 08:00", "13 Jul 01:30", "13 Jul 17:30", "14 Jul 09:30"];

const slate = "#778899";
const priceY = p => Math.round(90 + (1.4215 - p) / 0.002 * 37.63) + 0.5;

// small repeatable generator so bars keep their shape on redraw
function randomizer(seed) {
  return () => (seed = (seed * 16807) % 2147483647) / 2147483647;
}

function line(x1, y1, x2, y2, stroke, extra = "") {
  return `<line x1="${x1}" y1="${y1}" x2="${x2}" y2="${y2}" stroke="${stroke}" ${extra}/>`;
}

function text(x, y, str, cls, fill = "#fff", extra = "") {
  return `<text x="${x}" y="${y}" class="${cls}" fill="${fill}" ${extra}>${str}</text>`;
}

function bars() {
  const rnd = randomizer(77);
  let d = "";
  let k = 0;
  for (let x = 229; x <= 1866; x += 2) {
    while (k < envelope.length - 2 && envelope[k + 1][0] < x) k++;
    const [xa, ha, la] = envelope[k];
    const [xb, hb, lb] = envelope[k + 1];
    const t = Math.min(1, Math.max(0, (x - xa) / (xb - xa)));
    const high = ha + (hb - ha) * t;
    const low = la + (lb - la) * t;
    const span = low - high;
    const top = Math.round(high + rnd() * span * 0.5 - 6);
    const bottom = Math.round(low - rnd() * span * 0.5 + 6);
    d += `M${x + 0.5} ${top}V${bottom}`;
  }
  return `<path d="${d}" stroke="#00ff00" fill="none"/>`;
}

function tradeLines(list, colour) {
  return list.split(",").map(l => line(...l.split(" "), colour, 'stroke-dasharray="3 4"')).join("");
}

function draw() {
  const box = document.getElementById("chart");
  const left = 228, top = 76;
  const right = left + box.clientWidth - 42;
  const bottom = top + box.clientHeight - 18;
  let s = "";

  // grid
  for (let x = 229; x < right; x += 32) s += line(x + 0.5, 80, x + 0.5, bottom, slate, 'stroke-dasharray="4 4"');
  for (let p = 1.4215; p > 1.3814; p -= 0.002) {
    if (priceY(p) < bottom) s += line(229, priceY(p), right, priceY(p), slate, 'stroke-dasharray="3 3"');
  }

  // deals and bars
  deals.forEach(([, x, y]) => s += `<circle cx="${x}" cy="${y}" r="9" fill="#8f7b6c" stroke="${slate}"/>`);
  s += bars();
  s += tradeLines(buyLines, "#0000ff") + tradeLines(sellLines, "#ff4500");
  deals.forEach(([kind, x, y]) => {
    if (kind === "m") {
      s += `<path transform="translate(${x} ${y})" d="M-4 0l5-5v10z" fill="#f0f" stroke="#fff"/>`;
    } else {
      s += `<path transform="translate(${x} ${y})" d="M-4 -2h4v-3l5 5l-5 5v-3h-4z" fill="${kind === "b" ? "#00f" : "#f00"}" stroke="#fff"/>`;
    }
  });

  // levels
  const dash = 'stroke-dasharray="9 5 3 5"';
  s += line(229, 212.5, right, 212.5, "#32cd32", dash);
  s += line(229, 216.5, right, 216.5, "#f00", dash) + line(229, 215.5, right, 215.5, "#00bfff");
  s += line(229, 278.5, right, 278.5, "#32cd32", dash);
  s += line(229, 284.5, right, 284.5, slate);
  s += line(229, 312.5, right, 312.5, "#32cd32", dash);
  s += line(229, 343.5, right, 343.5, "#f00") + line(229, 344.5, right, 344.5, "#f00", dash);
  s += text(235, 210, "#30648146 buy", "axis-text") + text(235, 276, "#30655632 buy", "axis-text") + text(235, 310, "#30658506 sell", "axis-text");

  // comments in the corners
  s += text(233, 91, "EURUSD,M30  1.4112 1.4114 1.4111 1.4112", "axis-text");
  s += text(233, 104, "Start Lot = 0.01", "comment", "#ef9c2e");
  s += text(233, 116, "FreeMargin = 106917", "comment") + text(376, 116, "Balance = 121018", "comment");
  s += text(233, 129, "TotalBuy = 2  Lot = 0.03", "comment") + text(394, 129, "TotalSell = 1  Lot = 0.01", "comment");
  s += line(233, 138.5, 488, 138.5, "#b0c4de");
  s += text(233, 155, "Profit Buy =", "comment") + text(309, 155, "-4.4", "comment", "#ff4500") + text(368, 155, "-&gt; 6.40", "comment", "#0f0");
  s += text(233, 168, "Profit Sell =", "comment") + text(309, 168, "-1.8", "comment", "#ff4500") + text(368, 168, "-&gt; 1.70", "comment", "#0f0");
  s += text(233, bottom - 25, "Trade is Allowed", "comment", "#8ea4be") + text(233, bottom - 13, "TradeContextBusy  is Opened", "comment", "#8ea4be");
  s += text(right - 18, 92, "MartingailExpert_v2.0", "axis-text", "#fff", 'text-anchor="end"');
  s += `<g transform="translate(${right - 10} 88)" fill="none" stroke="#fff" shape-rendering="auto"><circle r="5"/><path d="M-3 1q3 4 6 0M-2 -2v1M2 -2v1"/></g>`;
  s += `<path d="M${right - 334} 80h10l-5 5zM229 ${bottom}v-6l6 6z" fill="${slate}"/>`;

  // frame and scales
  s += `<path d="M229.500 ${bottom + 0.5}V79.500H${right + 0.5}V${bottom + 0.5}z" fill="none" stroke="#fff"/>`;
  for (let p = 1.4215; p > 1.3814; p -= 0.002) {
    const y = priceY(p);
    if (y < bottom) s += line(right, y, right + 4, y, "#fff") + text(right + 7, y + 3, p.toFixed(4), "axis-text");
  }
  [["#00bfff", 215, "1.4148"], ["#fff", 284, "1.4112"], ["#f00", 343, "1.4080"]].forEach(([bg, y, str]) => {
    s += `<rect x="${right + 2}" y="${y - 5}" width="36" height="11" fill="${bg}"/>`;
    s += text(right + 7, y + 4, str, "", "#000", 'font-size="9"');
  });
  times.forEach((t, i) => {
    const x = 229 + i * 64;
    s += line(x + 0.5, bottom, x + 0.5, bottom + 4, "#fff") + text(x - 1, bottom + 13, t, "axis-text");
  });

  box.innerHTML = `<svg width="${box.clientWidth}" height="${box.clientHeight}" shape-rendering="crispEdges"><g transform="translate(-${left} -${top})">${s}</g></svg>`;
}

draw();
window.addEventListener("resize", draw);
```
